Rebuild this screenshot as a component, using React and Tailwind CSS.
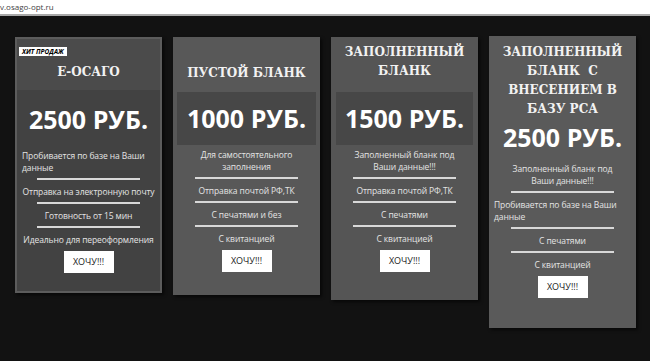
const serif = { fontFamily: '"DejaVu Serif", "Liberation Serif", serif' };

const Sep = () => <div className="mx-auto mb-[6px] mt-[4px] h-[2px] w-[103px] bg-[#d8d8d8]" />;

const Feature = ({ children, left, wide }) => (
  <p
    className={`text-[8.5px] leading-[12px] tracking-[-0.1px] text-[#e4e4e4] ${
      left ? 'text-left px-[5px]' : wide ? 'text-center px-[18px]' : 'text-center px-[2px]'
    }`}
  >
    {children}
  </p>
);

const Buy = () => (
  <div className="mt-[5px] flex justify-center">
    <button className="h-[22px] w-[50px] bg-white text-[9px] text-[#222]">ХОЧУ!!!</button>
  </div>
);

const cards = [
  {
    title: ['Е-ОСАГО'],
    price: '2500 РУБ.',
    hit: true,
    h: 'h-[256px] mt-[21px]',
    box: 'bg-[#424242] border-2 border-[#5c5c5c]',
    head: 'bg-[#4b4b4b] h-[51px] pt-[24px]',
    band: 'h-[58px]',
    gap: 'mt-[2px]',
    feats: [
      { t: 'Пробивается по базе на Ваши данные', left: true },
      { t: 'Отправка на электронную почту' },
      { t: 'Готовность от 15 мин' },
      { t: 'Идеально для переоформления' },
    ],
  },
  {
    title: ['ПУСТОЙ БЛАНК'],
    price: '1000 РУБ.',
    h: 'h-[258px] mt-[21px]',
    box: 'bg-[#585858]',
    head: 'h-[55px] pt-[27px]',
    band: 'mx-[4px] h-[53px] bg-[#474747]',
    gap: 'mt-[4px]',
    feats: [
      { t: 'Для самостоятельного заполнения', wide: true },
      { t: 'Отправка почтой РФ,ТК' },
      { t: 'С печатями и без' },
      { t: 'С квитанцией' },
    ],
  },
  {
    title: ['ЗАПОЛНЕННЫЙ', 'БЛАНК'],
    price: '1500 РУБ.',
    h: 'h-[263px] mt-[21px]',
    box: 'bg-[#555555]',
    head: 'h-[55px] pt-[6px]',
    band: 'mx-[5px] h-[53px] bg-[#474747]',
    gap: 'mt-[4px]',
    feats: [
      { t: 'Заполненный бланк под Ваши данные!!!', wide: true },
      { t: 'Отправка почтой РФ,ТК' },
      { t: 'С печатями' },
      { t: 'С квитанцией' },
    ],
  },
  {
    title: ['ЗАПОЛНЕННЫЙ', 'БЛАНК  С', 'ВНЕСЕНИЕМ В', 'БАЗУ РСА'],
    price: '2500 РУБ.',
    h: 'h-[292px] mt-[20px]',
    box: 'bg-[#5a5a5a]',
    head: 'pt-[7px]',
    band: 'h-[36px]',
    gap: 'mt-[8px]',
    feats: [
      { t: 'Заполненный бланк под Ваши данные!!!', wide: true },
      { t: 'Пробивается по базе на Ваши данные', left: true },
      { t: 'С печатями' },
      { t: 'С квитанцией' },
    ],
  },
];

const Card = ({ c }) => (
  <div className={`relative w-[147px] shrink-0 ${c.h} ${c.box} shadow-[2px_2px_3px_rgba(0,0,0,0.6)]`}>
    {c.hit && (
      <span className="absolute left-[2px] top-[8px] bg-white px-[3px] text-[6.5px] font-bold italic leading-[9px] text-black">
        ХИТ ПРОДАЖ
      </span>
    )}
    <div className={`${c.head} text-center`}>
      {c.title.map((l) => (
        <div key={l} style={serif} className="whitespace-pre text-[12px] font-bold leading-[19px] text-[#f2f2f2]">
          {l}
        </div>
      ))}
    </div>
    <div className={`${c.band} flex items-center justify-center`}>
      <span className="text-[25px] font-bold leading-none text-white" style={{ fontFamily: '"Open Sans", sans-serif' }}>
        {c.price}
      </span>
    </div>
    <div className={c.gap}>
      {c.feats.map((f, i) => (
        <div key={i}>
          {i > 0 && <Sep />}
          <Feature left={f.left} wide={f.wide}>
            {f.t}
          </Feature>
        </div>
      ))}
    </div>
    <Buy />
  </div>
);

export default function App() {
  return (
    <div className="h-[361px] w-[650px] overflow-hidden bg-[#121212]" style={{ fontFamily: '"Open Sans", sans-serif' }}>
      <div className="h-[16px] border-b-2 border-[#a8a8a8] bg-white text-[8px] leading-[13px] text-[#444]">v.osago-opt.ru</div>
      <div className="flex items-start gap-[11px] pl-[15px]">
        {cards.map((c, i) => (
          <Card key={i} c={c} />
        ))}
      </div>
    </div>
  );
}
